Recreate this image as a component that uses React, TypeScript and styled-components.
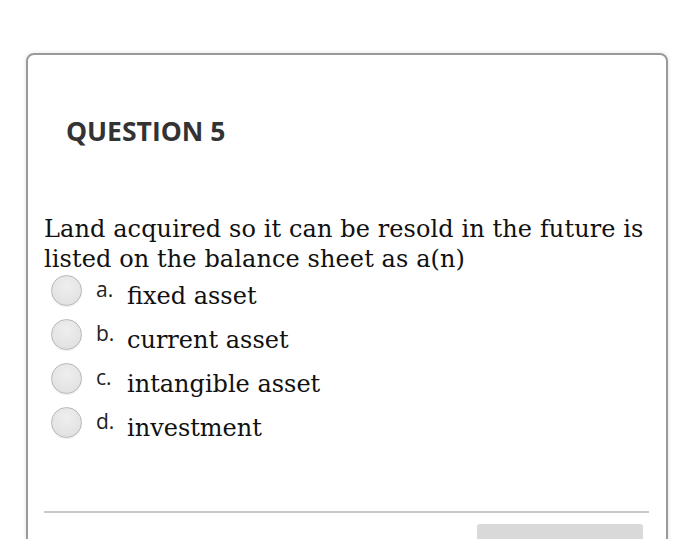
import React from "react";
import styled, { createGlobalStyle } from "styled-components";

const GlobalStyle = createGlobalStyle`
  html, body {
    margin: 0;
    padding: 0;
    background: #ffffff;
  }
  body {
    font-family: "Open Sans", "Noto Sans", sans-serif;
    color: #222;
  }
`;

const Page = styled.div`
  padding: 53px 27px 0 26px;
  height: 539px;
  box-sizing: border-box;
  overflow: hidden;
`;

const Card = styled.div`
  border: 2px solid #9a9a9a;
  border-radius: 8px;
  box-shadow: 0 0 4px rgba(0, 0, 0, 0.12);
  padding: 0 6px 40px 16px;
  min-height: 600px;
`;

const Heading = styled.h2`
  margin: 60px 0 0 22px;
  font-family: "Open Sans", sans-serif;
  font-weight: 700;
  font-size: 26.5px;
  line-height: 32px;
  color: #333;
`;

const Prompt = styled.p`
  margin: 67px 0 0 0;
  font-family: "DejaVu Serif", serif;
  font-size: 24px;
  line-height: 30px;
  letter-spacing: 0.1px;
  color: #111;
`;

const Options = styled.div`
  display: flex;
  flex-direction: column;
  margin-top: 1px;
  padding-left: 7px;
`;

const Option = styled.label`
  display: flex;
  align-items: flex-start;
  height: 44px;
`;

const Radio = styled.span`
  width: 29px;
  height: 29px;
  border-radius: 50%;
  border: 1px solid #b8b8b8;
  background: radial-gradient(circle at 50% 35%, #eeeeee 0%, #e4e4e4 65%, #d9d9d9 100%);
  box-shadow: 0 1px 1px rgba(0, 0, 0, 0.08);
  flex: none;
`;

const Letter = styled.span`
  margin: 2px 0 0 14px;
  width: 31px;
  font-family: "Open Sans", sans-serif;
  font-size: 21px;
  line-height: 24px;
  color: #222;
`;

const OptionText = styled.span`
  margin-top: 6px;
  font-family: "DejaVu Serif", serif;
  font-size: 24px;
  line-height: 30px;
  color: #111;
`;

const Divider = styled.hr`
  margin: 60px 11px 0 0;
  border: none;
  border-top: 2px solid #c8c8c8;
`;

const Footer = styled.div`
  display: flex;
  justify-content: flex-end;
  padding: 11px 17px 0 0;
`;

const SaveButton = styled.button`
  width: 166px;
  height: 40px;
  border: none;
  border-radius: 3px;
  background: #d9d9d9;
`;

const choices = [
  { letter: "a.", text: "fixed asset" },
  { letter: "b.", text: "current asset" },
  { letter: "c.", text: "intangible asset" },
  { letter: "d.", text: "investment" },
];

export default function App() {
  return (
    <>
      <GlobalStyle />
      <Page>
        <Card>
          <Heading>QUESTION 5</Heading>
          <Prompt>
            Land acquired so it can be resold in the future is listed on the balance sheet as a(n)
          </Prompt>
          <Options>
            {choices.map((c) => (
              <Option key={c.letter}>
                <Radio />
                <Letter>{c.letter}</Letter>
                <OptionText>{c.text}</OptionText>
              </Option>
            ))}
          </Options>
          <Divider />
          <Footer>
            <SaveButton aria-label="Save answer" />
          </Footer>
        </Card>
      </Page>
    </>
  );
}
